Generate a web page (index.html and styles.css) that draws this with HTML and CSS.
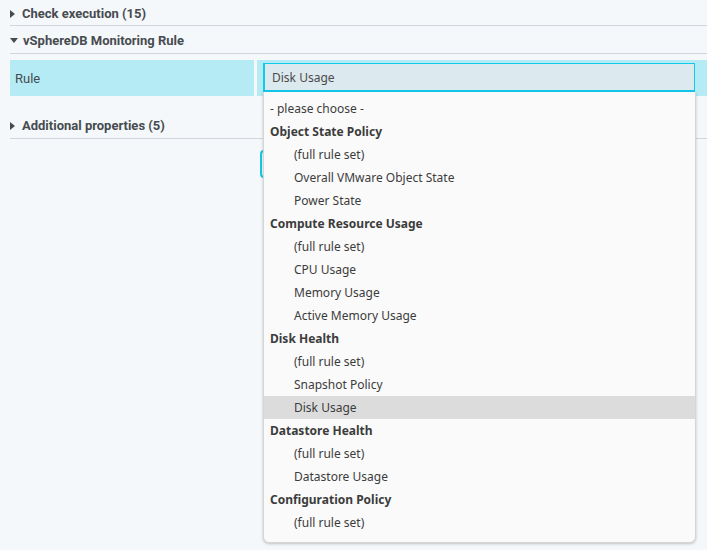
FILE: index.html
```html
<!DOCTYPE html>
<html>
<head>
<meta charset="utf-8">
<link rel="stylesheet" href="styles.css">
</head>
<body>
<div class="page">
  <div class="section-head first"><span class="tri right"></span>Check execution (15)</div>
  <div class="section-head"><span class="tri down"></span>vSphereDB Monitoring Rule</div>
  <div class="row">
    <div class="label">Rule</div>
    <div class="value">
      <div class="select">Disk Usage</div>
      <ul class="dropdown">
        <li class="opt plain">- please choose -</li>
        <li class="grp">Object State Policy</li>
        <li class="opt">(full rule set)</li>
        <li class="opt">Overall VMware Object State</li>
        <li class="opt">Power State</li>
        <li class="grp">Compute Resource Usage</li>
        <li class="opt">(full rule set)</li>
        <li class="opt">CPU Usage</li>
        <li class="opt">Memory Usage</li>
        <li class="opt">Active Memory Usage</li>
        <li class="grp">Disk Health</li>
        <li class="opt">(full rule set)</li>
        <li class="opt">Snapshot Policy</li>
        <li class="opt selected">Disk Usage</li>
        <li class="grp">Datastore Health</li>
        <li class="opt">(full rule set)</li>
        <li class="opt">Datastore Usage</li>
        <li class="grp">Configuration Policy</li>
        <li class="opt">(full rule set)</li>
      </ul>
    </div>
  </div>
  <div class="section-head add"><span class="tri right"></span>Additional properties (5)</div>
  <div class="buttons"><div class="btn"></div></div>
</div>
</body>
</html>
```
FILE: styles.css
```css
html, body {
  margin: 0;
  padding: 0;
  background: #f4f8fa;
  font-family: Roboto, "Liberation Sans", sans-serif;
  color: #474b50;
}
.page {
  padding-left: 10px;
  height: 550px;
  overflow: hidden;
}
.section-head {
  display: flex;
  align-items: center;
  border-bottom: 1px solid #d2d7dd;
  font-size: 13px;
  font-weight: bold;
  color: #474b50;
  box-sizing: border-box;
  height: 28px;
  padding-top: 1px;
}
.section-head.first {
  height: 26px;
  padding-top: 2px;
}
.section-head.add {
  margin-top: 15px;
  height: 28px;
  padding-top: 2px;
}
.tri {
  display: inline-block;
  width: 0;
  height: 0;
}
.tri.right {
  border-top: 4px solid transparent;
  border-bottom: 4px solid transparent;
  border-left: 5px solid #474b50;
  margin-right: 7px;
}
.tri.down {
  border-left: 4px solid transparent;
  border-right: 4px solid transparent;
  border-top: 5px solid #474b50;
  margin-right: 5px;
}
.row {
  display: flex;
  gap: 3px;
  margin-top: 6px;
  height: 36px;
}
.label {
  width: 244px;
  background: #b4ebf5;
  font-size: 13px;
  padding-left: 5px;
  box-sizing: border-box;
  display: flex;
  align-items: center;
  color: #474b50;
}
.value {
  flex: 1;
  background: #b4ebf5;
  position: relative;
  padding: 3px 12px 0 6px;
}
.select {
  height: 29px;
  box-sizing: border-box;
  background: #dce9ef;
  border: 1px solid #12c9ea;
  border-left: 2px solid #12c9ea;
  border-bottom: 2px solid #12c9ea;
  font-family: "Noto Sans", "Open Sans", sans-serif;
  font-size: 12px;
  color: #4a4a4a;
  padding-left: 7px;
  display: flex;
  align-items: center;
}
.dropdown {
  position: absolute;
  left: 6px;
  top: 32px;
  width: 433px;
  margin: 0;
  padding: 5px 0 0;
  list-style: none;
  background: #fafafa;
  border: 1px solid #d6d6d6;
  border-top: none;
  border-radius: 0 0 6px 6px;
  box-shadow: 0 1px 3px rgba(0,0,0,0.22);
  font-family: "Noto Sans", "Open Sans", sans-serif;
  font-size: 12px;
  color: #3c3c3c;
  height: 451px;
  box-sizing: border-box;
  z-index: 2;
}
.dropdown li {
  height: 23px;
  display: flex;
  align-items: center;
}
.dropdown .grp {
  font-weight: bold;
  padding-left: 6px;
}
.dropdown .opt {
  padding-left: 30px;
}
.dropdown .opt.plain {
  padding-left: 6px;
}
.dropdown .selected {
  background: #dcdcdc;
}
.buttons {
  display: flex;
  padding-left: 250px;
  margin-top: 11px;
}
.btn {
  width: 60px;
  height: 28px;
  box-sizing: border-box;
  border: 2px solid #12c9ea;
  border-radius: 4px;
  background: #f4f8fa;
}
```
